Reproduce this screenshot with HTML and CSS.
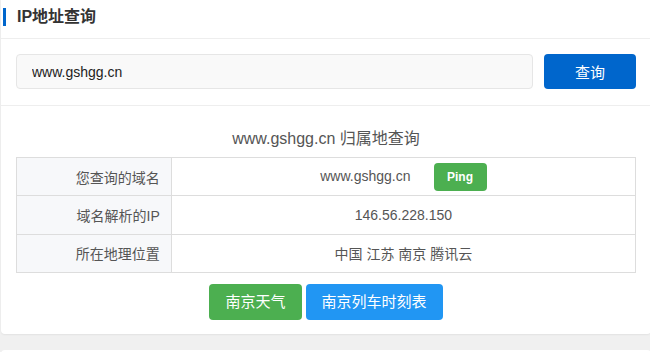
FILE: index.html
```html
<!DOCTYPE html>
<html lang="zh-CN">
<head>
<meta charset="utf-8">
<title>IP地址查询</title>
<link rel="stylesheet" href="styles.css">
</head>
<body>
<div class="card">
  <div class="card-head"><h2 class="card-title">IP地址查询</h2></div>
  <form class="search">
    <input class="search-input" type="text" value="www.gshgg.cn">
    <button class="search-btn" type="button">查询</button>
  </form>
  <div class="result">
    <h3 class="result-title">www.gshgg.cn 归属地查询</h3>
    <table class="result-table">
      <tr><td class="label">您查询的域名</td><td class="value">www.gshgg.cn<a class="ping">Ping</a></td></tr>
      <tr><td class="label">域名解析的IP</td><td class="value">146.56.228.150</td></tr>
      <tr><td class="label">所在地理位置</td><td class="value">中国 江苏 南京 腾讯云</td></tr>
    </table>
    <div class="links">
      <a class="link-btn green">南京天气</a>
      <a class="link-btn blue">南京列车时刻表</a>
    </div>
  </div>
</div>
<div class="card card-next"></div>
</body>
</html>
```
FILE: styles.css
```css
html, body {
  margin: 0;
  padding: 0;
  overflow: hidden;
  background: #f0f0f0;
  font-family: "Liberation Sans", "Noto Sans CJK SC", sans-serif;
  color: #555;
}
.card {
  width: 650px;
  margin: 0 0 16px 1px;
  background: #fff;
  border-radius: 0 0 4px 4px;
  box-shadow: 0 1px 2px rgba(0,0,0,0.06);
}
.card-next {
  height: 60px;
  border-radius: 4px;
}
.card-head {
  padding: 8px 0 12px 2px;
  border-bottom: 1px solid #eeeeee;
}
.card-title {
  margin: 0;
  border-left: 3px solid #0066cc;
  padding-left: 11px;
  font-size: 16px;
  line-height: 18px;
  font-weight: bold;
  color: #333;
}
.search {
  display: flex;
  gap: 11px;
  margin: 0;
  padding: 15px 15px 16px 15px;
  border-bottom: 1px solid #eeeeee;
}
.search-input {
  flex: 1;
  box-sizing: border-box;
  height: 35px;
  margin: 0;
  padding: 0 15px;
  border: 1px solid #e6e6e6;
  border-radius: 4px;
  background: #f9f9f9;
  font-family: inherit;
  font-size: 14px;
  color: #222;
  outline: none;
}
.search-btn {
  width: 92px;
  height: 35px;
  margin: 0;
  border: 0;
  border-radius: 4px;
  background: #0066cc;
  color: #fff;
  font-family: inherit;
  font-size: 15px;
}
.result {
  padding: 21px 15px 14px 15px;
}
.result-title {
  margin: 0 0 6px;
  text-align: center;
  font-size: 16px;
  line-height: 24px;
  font-weight: normal;
  color: #555;
}
.result-table {
  width: 100%;
  border-collapse: collapse;
  border: 1px solid #dddddd;
  font-size: 14px;
}
.result-table td {
  border: 1px solid #dddddd;
  height: 37.3px;
  padding: 0;
  vertical-align: middle;
}
.label {
  width: 25%;
  box-sizing: border-box;
  background: #f7f8fa;
  text-align: right;
  padding-right: 11px !important;
  color: #555;
}
.value {
  text-align: center;
  color: #555;
}
.ping {
  display: inline-block;
  margin-left: 23px;
  padding: 0 13.5px;
  height: 28px;
  line-height: 28px;
  border-radius: 4px;
  background: #4caf50;
  color: #fff;
  font-size: 12px;
  font-weight: bold;
  vertical-align: middle;
}
.links {
  display: flex;
  justify-content: center;
  gap: 4px;
  margin-top: 11px;
}
.link-btn {
  display: block;
  height: 36px;
  line-height: 36px;
  padding: 0 16px;
  border-radius: 4px;
  color: #fff;
  font-size: 15px;
}
.green { background: #4caf50; }
.blue { background: #2196f3; }
```
